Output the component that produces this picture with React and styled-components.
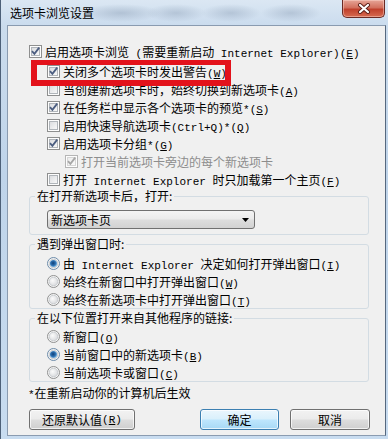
import React, { useId } from "react";
import styled, { createGlobalStyle } from "styled-components";

const Global = createGlobalStyle`
  html, body { margin: 0; padding: 0; background: #c4d7ec; }
  body {
    font-family: "Noto Sans CJK SC", "Liberation Sans", sans-serif;
    font-size: 12px;
    color: #000;
  }
`;

const Window = styled.div`
  position: relative;
  width: 388px;
  height: 439px;
  box-sizing: border-box;
  border-left: 1px solid #4d6078;
  background: linear-gradient(180deg, #cddded 0%, #bfd4ea 40%, #c8dcf0 100%);
  display: flex;
  flex-direction: column;
  overflow: hidden;
`;

const TitleBar = styled.div`
  height: 25px;
  flex: none;
  display: flex;
  justify-content: space-between;
  align-items: flex-start;
  padding: 0 3px 0 9px;
  background:
    radial-gradient(ellipse 40px 9px at 120px 13px, rgba(150, 168, 190, 0.55), rgba(150, 168, 190, 0) 100%),
    radial-gradient(ellipse 30px 9px at 175px 13px, rgba(150, 168, 190, 0.5), rgba(150, 168, 190, 0) 100%),
    radial-gradient(ellipse 30px 9px at 230px 13px, rgba(150, 168, 190, 0.5), rgba(150, 168, 190, 0) 100%),
    radial-gradient(ellipse 30px 9px at 290px 13px, rgba(150, 168, 190, 0.5), rgba(150, 168, 190, 0) 100%),
    linear-gradient(180deg, #dbe7f3 0%, #cbdcee 100%);
`;

const Title = styled.div`
  line-height: 25px;
  font-size: 12px;
  color: #000;
`;

const CloseBtn = styled.div`
  width: 43px;
  height: 18px;
  box-sizing: border-box;
  border: 1px solid #6a2a24;
  border-top: none;
  border-radius: 0 0 5px 5px;
  background: linear-gradient(180deg, #e6a597 0%, #d2705e 45%, #c0402c 55%, #d66a50 100%);
  box-shadow: inset 0 0 0 1px rgba(255, 220, 210, 0.45);
  display: flex;
  align-items: center;
  justify-content: center;
`;

const Client = styled.div`
  flex: 1;
  margin: 0 2px 3px 6px;
  border: 1px solid #8a9bb0;
  border-right-color: #56687e;
  background: #f0f0f0;
  padding: 16px 16px 0 21px;
  display: flex;
  flex-direction: column;
`;

const Row = styled.div`
  display: flex;
  align-items: center;
  gap: 3px;
  height: 18px;
  padding-left: ${(p) => p.$indent || 0}px;
  margin-top: ${(p) => p.$mt || 0}px;
  white-space: nowrap;
  color: ${(p) => (p.$disabled ? "#8d8d8d" : "#000")};
`;

const Lat = styled.span`
  font-family: "Liberation Mono", "DejaVu Sans Mono", monospace;
  font-size: 11px;
`;

const U = styled.span`
  text-decoration: underline;
  text-underline-offset: 1px;
`;

const Group = styled.fieldset`
  margin: ${(p) => p.$mt || 0}px 0 0 0;
  padding: ${(p) => p.$pt || 0}px 0 ${(p) => p.$pb || 0}px 7px;
  width: 340px;
  min-width: 0;
  box-sizing: border-box;
  border: 1px solid #d3dce3;
  border-radius: 3px;
`;

const Legend = styled.legend`
  padding: 0 2px;
  margin-left: -2px;
  line-height: 16px;
  font-size: 12px;
`;

const Combo = styled.div`
  margin-left: 10px;
  width: 208px;
  height: 19px;
  box-sizing: border-box;
  border: 1px solid #707070;
  border-radius: 3px;
  background: linear-gradient(180deg, #f4f4f4 0%, #ebebeb 48%, #dddddd 52%, #d2d2d2 100%);
  display: flex;
  align-items: center;
  justify-content: space-between;
  padding: 0 5px 0 3px;
`;

const Note = styled.div`
  margin-top: 2px;
  height: 18px;
  line-height: 18px;
  margin-left: -1px;
`;

const Footer = styled.div`
  margin-top: 7px;
  width: 341px;
  display: flex;
  justify-content: space-between;
`;

const RightBtns = styled.div`
  display: flex;
  gap: 11px;
`;

const Button = styled.div`
  width: ${(p) => p.$w}px;
  height: 21px;
  box-sizing: border-box;
  border: 1px solid ${(p) => (p.$default ? "#3c7fb1" : "#707070")};
  border-radius: 3px;
  background: ${(p) =>
    p.$default
      ? "linear-gradient(180deg, #eaf6fd 0%, #d9f0fc 48%, #bee6fd 52%, #a7d9f5 100%)"
      : "linear-gradient(180deg, #f2f2f2 0%, #ebebeb 48%, #dddddd 52%, #cfcfcf 100%)"};
  box-shadow: inset 0 0 0 1px rgba(255, 255, 255, 0.7);
  display: flex;
  align-items: center;
  justify-content: center;
  white-space: nowrap;
`;

const Annotation = styled.div`
  position: absolute;
  left: 30px;
  top: 60px;
  width: 200px;
  height: 26px;
  box-sizing: border-box;
  border: 5px solid #e3121b;
  border-left-width: 6px;
  border-right-width: 6px;
  border-bottom-width: 6px;
  pointer-events: none;
`;

function Acc({ k }) {
  return (
    <Lat>
      (<U>{k}</U>)
    </Lat>
  );
}

function CheckBox({ checked, disabled }) {
  const id = useId().replace(/:/g, "");
  const outer = disabled ? "#b5b5b5" : "#8e8f8f";
  const inner = disabled ? "#d6d6d6" : "#b0b5ba";
  const mark = disabled ? "#a6a6a6" : "#4b5d80";
  return (
    <svg width="13" height="13" viewBox="0 0 13 13" style={{ flex: "none" }}>
      <defs>
        <linearGradient id={id} x1="0" y1="0" x2="1" y2="1">
          <stop offset="0" stopColor={disabled ? "#ececec" : "#d9dbde"} />
          <stop offset="1" stopColor="#fafafa" />
        </linearGradient>
      </defs>
      <rect x="0.5" y="0.5" width="12" height="12" fill="#fdfdfd" stroke={outer} />
      <rect x="2.5" y="2.5" width="8" height="8" fill={`url(#${id})`} stroke={inner} />
      {checked && (
        <path d="M3 6.2 L5.4 8.8 L10.2 2.6" fill="none" stroke={mark} strokeWidth="1.8" />
      )}
    </svg>
  );
}

function Radio({ checked }) {
  const id = useId().replace(/:/g, "");
  return (
    <svg width="13" height="13" viewBox="0 0 13 13" style={{ flex: "none" }}>
      <defs>
        <radialGradient id={id + "a"} cx="0.4" cy="0.4" r="0.7">
          <stop offset="0" stopColor="#fbfbfb" />
          <stop offset="1" stopColor="#d4d6d9" />
        </radialGradient>
        <radialGradient id={id + "b"} cx="0.45" cy="0.45" r="0.6">
          <stop offset="0" stopColor="#0f3f78" />
          <stop offset="0.55" stopColor="#2c6fb0" />
          <stop offset="1" stopColor="#8ec3ea" />
        </radialGradient>
      </defs>
      <circle cx="6.5" cy="6.5" r="6" fill="#f6f6f6" stroke={checked ? "#6c8aa8" : "#8e8f8f"} />
      <circle cx="6.5" cy="6.5" r="4.3" fill={`url(#${id}a)`} stroke="#c2c5c9" strokeWidth="0.8" />
      {checked && <circle cx="6.5" cy="6.5" r="3.6" fill={`url(#${id}b)`} />}
    </svg>
  );
}

export default function App() {
  return (
    <>
      <Global />
      <Window>
        <TitleBar>
          <Title>选项卡浏览设置</Title>
          <CloseBtn>
            <svg width="14" height="11" viewBox="0 0 14 11">
              <path d="M3 2 L11 9 M11 2 L3 9" stroke="#5a1d17" strokeWidth="4" strokeLinecap="round" />
              <path d="M3 2 L11 9 M11 2 L3 9" stroke="#ffffff" strokeWidth="2.2" strokeLinecap="round" />
            </svg>
          </CloseBtn>
        </TitleBar>
        <Client>
          <Row>
            <CheckBox checked />
            <span>
              启用选项卡浏览<Lat> (</Lat>需要重新启动<Lat> Internet Explorer)</Lat>
              <Acc k="E" />
            </span>
          </Row>
          <Row $indent={18} $mt={2}>
            <CheckBox checked />
            <span>
              关闭多个选项卡时发出警告<Acc k="W" />
            </span>
          </Row>
          <Row $indent={18}>
            <CheckBox />
            <span>
              当创建新选项卡时，始终切换到新选项卡<Acc k="A" />
            </span>
          </Row>
          <Row $indent={18}>
            <CheckBox checked />
            <span>
              在任务栏中显示各个选项卡的预览<Lat>*</Lat>
              <Acc k="S" />
            </span>
          </Row>
          <Row $indent={18}>
            <CheckBox />
            <span>
              启用快速导航选项卡<Lat>(Ctrl+Q)*</Lat>
              <Acc k="Q" />
            </span>
          </Row>
          <Row $indent={18}>
            <CheckBox checked />
            <span>
              启用选项卡分组<Lat>*</Lat>
              <Acc k="G" />
            </span>
          </Row>
          <Row $indent={36} $disabled>
            <CheckBox checked disabled />
            <span>打开当前选项卡旁边的每个新选项卡</span>
          </Row>
          <Row $indent={18}>
            <CheckBox />
            <span>
              打开<Lat> Internet Explorer </Lat>时只加载第一个主页<Acc k="F" />
            </span>
          </Row>

          <Group $pt={6} $pb={5}>
            <Legend>在打开新选项卡后，打开:</Legend>
            <Combo>
              <span>新选项卡页</span>
              <svg width="7" height="4" viewBox="0 0 7 4">
                <path d="M0 0 H7 L3.5 4 Z" fill="#000" />
              </svg>
            </Combo>
          </Group>

          <Group $mt={1} $pt={2}>
            <Legend>遇到弹出窗口时:</Legend>
            <Row $indent={10}>
              <Radio checked />
              <span>
                由<Lat> Internet Explorer </Lat>决定如何打开弹出窗口<Acc k="I" />
              </span>
            </Row>
            <Row $indent={10}>
              <Radio />
              <span>
                始终在新窗口中打开弹出窗口<Acc k="W" />
              </span>
            </Row>
            <Row $indent={10}>
              <Radio />
              <span>
                始终在新选项卡中打开弹出窗口<Acc k="T" />
              </span>
            </Row>
          </Group>

          <Group $mt={1} $pt={1}>
            <Legend>在以下位置打开来自其他程序的链接:</Legend>
            <Row $indent={10}>
              <Radio />
              <span>
                新窗口<Acc k="O" />
              </span>
            </Row>
            <Row $indent={10}>
              <Radio checked />
              <span>
                当前窗口中的新选项卡<Acc k="B" />
              </span>
            </Row>
            <Row $indent={10}>
              <Radio />
              <span>
                当前选项卡或窗口<Acc k="C" />
              </span>
            </Row>
          </Group>

          <Note>
            <Lat>*</Lat>在重新启动你的计算机后生效
          </Note>

          <Footer>
            <Button $w={106}>
              还原默认值<Acc k="R" />
            </Button>
            <RightBtns>
              <Button $w={79} $default>
                确定
              </Button>
              <Button $w={80}>取消</Button>
            </RightBtns>
          </Footer>
        </Client>
        <Annotation />
      </Window>
    </>
  );
}
